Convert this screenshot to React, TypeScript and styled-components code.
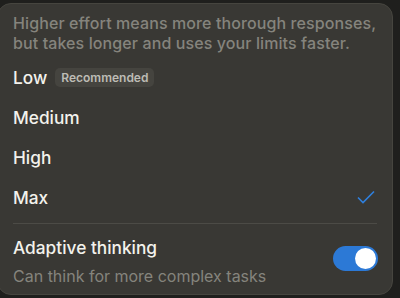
import React from "react";
import styled, { createGlobalStyle } from "styled-components";

const Global = createGlobalStyle`
  html, body { margin: 0; padding: 0; background: #1f1f1d; }
  body { width: 400px; height: 298px; overflow: hidden; font-family: Inter, "Noto Sans", sans-serif; }
`;

const Page = styled.div`
  padding-top: 3px;
  margin-left: -3px;
`;

const Panel = styled.div`
  width: 396px;
  height: 292px;
  box-sizing: border-box;
  background: #393834;
  border: 1px solid #46453f;
  border-radius: 14px;
  padding: 9px 15px 0 15px;
  display: flex;
  flex-direction: column;
`;

const Description = styled.p`
  margin: 0;
  font-size: 16px;
  font-weight: 500;
  line-height: 20px;
  letter-spacing: 0.1px;
  color: #85847d;
  white-space: pre;
`;

const Options = styled.div`
  margin-top: 4px;
  display: flex;
  flex-direction: column;
`;

const Row = styled.div`
  height: 40px;
  display: flex;
  align-items: center;
  gap: 8px;
`;

const Label = styled.span`
  font-size: 17.3px;
  color: #f3f2ec;
  font-weight: 500;
`;

const Badge = styled.span`
  font-size: 12px;
  font-weight: 600;
  color: #bdbcb5;
  background: #45443f;
  border-radius: 5px;
  padding: 0 6px;
  height: 19px;
  line-height: 19px;
`;

const Check = styled.svg`
  margin-left: auto;
  margin-right: 2px;
`;

const Divider = styled.div`
  height: 1px;
  background: #4c4b46;
  margin: 6px 0 0 0;
`;

const ToggleRow = styled.div`
  display: flex;
  align-items: flex-start;
  justify-content: space-between;
  padding-top: 13px;
`;

const ToggleText = styled.div`
  display: flex;
  flex-direction: column;
  gap: 8px;
`;

const Sub = styled.span`
  font-size: 16px;
  color: #85847d;
`;

const Switch = styled.div<{ $on: boolean }>`
  width: 45px;
  height: 25px;
  border-radius: 13px;
  background: ${(p) => (p.$on ? "#2c79d6" : "#555")};
  display: flex;
  align-items: center;
  justify-content: ${(p) => (p.$on ? "flex-end" : "flex-start")};
  padding: 0 2px;
  box-sizing: border-box;
  margin-top: 9px;
  margin-right: -1px;
`;

const Knob = styled.div`
  width: 21px;
  height: 21px;
  border-radius: 50%;
  background: #ffffff;
`;

const options = ["Low", "Medium", "High", "Max"];

export default function App() {
  return (
    <>
      <Global />
      <Page>
        <Panel>
          <Description>
            {"Higher effort means more thorough responses,\nbut takes longer and uses your limits faster."}
          </Description>
          <Options>
            {options.map((o) => (
              <Row key={o}>
                <Label>{o}</Label>
                {o === "Low" && <Badge>Recommended</Badge>}
                {o === "Max" && (
                  <Check width="18" height="14" viewBox="0 0 18 14">
                    <path d="M1 7.5 L6 12.5 L17 1.5" fill="none" stroke="#2f7fdc" strokeWidth="1.6" />
                  </Check>
                )}
              </Row>
            ))}
          </Options>
          <Divider />
          <ToggleRow>
            <ToggleText>
              <Label>Adaptive thinking</Label>
              <Sub>Can think for more complex tasks</Sub>
            </ToggleText>
            <Switch $on>
              <Knob />
            </Switch>
          </ToggleRow>
        </Panel>
      </Page>
    </>
  );
}
